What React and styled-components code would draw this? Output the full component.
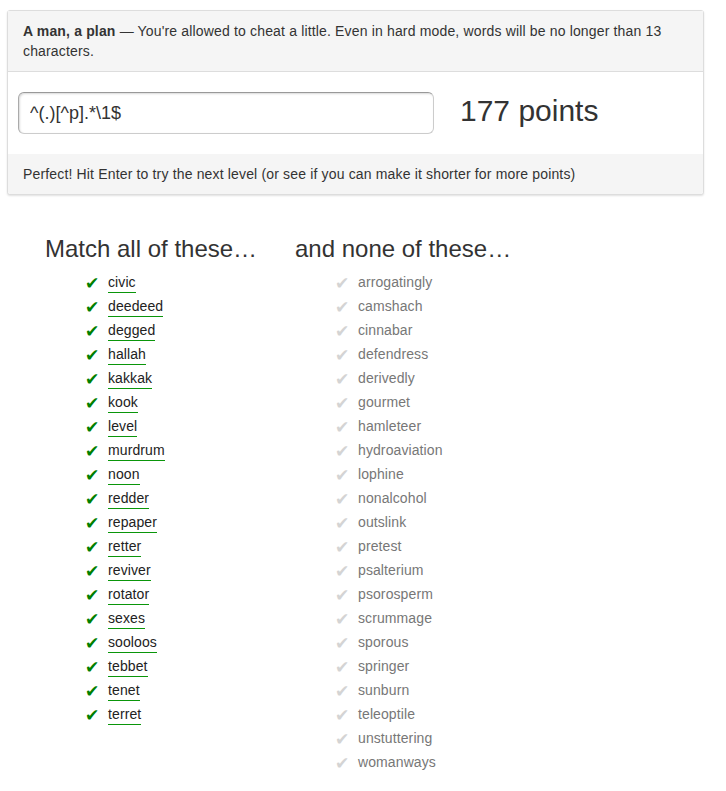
import React from 'react';
import styled, { createGlobalStyle } from 'styled-components';

const matchWords = [
	'civic', 'deedeed', 'degged', 'hallah', 'kakkak', 'kook', 'level', 'murdrum',
	'noon', 'redder', 'repaper', 'retter', 'reviver', 'rotator', 'sexes', 'sooloos',
	'tebbet', 'tenet', 'terret'
];
const noneWords = [
	'arrogatingly', 'camshach', 'cinnabar', 'defendress', 'derivedly', 'gourmet',
	'hamleteer', 'hydroaviation', 'lophine', 'nonalcohol', 'outslink', 'pretest',
	'psalterium', 'psorosperm', 'scrummage', 'sporous', 'springer', 'sunburn',
	'teleoptile', 'unstuttering', 'womanways'
];

const GlobalStyle = createGlobalStyle`
	body {
		margin: 0;
		background: #fff;
		font-family: "Liberation Sans", Arial, sans-serif;
		font-size: 14px;
		line-height: 20px;
		color: #333;
	}
`;

const Page = styled.div`
	padding: 10px 22px 20px 7px;
`;
const Panel = styled.div`
	border: 1px solid #ddd;
	border-radius: 3px;
	background: #fff;
	box-shadow: 0 1px 2px rgba(0, 0, 0, 0.12);
	letter-spacing: 0.16px;
`;
const Heading = styled.div`
	background: #f5f5f5;
	border-bottom: 1px solid #ddd;
	padding: 10px 15px;
	strong {
		font-weight: bold;
	}
`;
const Body = styled.div`
	display: flex;
	align-items: center;
	padding: 20px 10px;
`;
const RegexInput = styled.input`
	box-sizing: border-box;
	width: 416px;
	height: 42px;
	padding: 0 11px;
	font-family: "Liberation Sans", Arial, sans-serif;
	font-size: 18px;
	color: #333;
	border: 1px solid #ccc;
	border-top-color: #999;
	border-left-color: #aaa;
	border-radius: 6px;
	box-shadow: inset 1px 1px 2px rgba(0, 0, 0, 0.15);
	outline: none;
`;
const Points = styled.div`
	margin: 0 0 4px 26px;
	font-size: 30px;
	line-height: 36px;
	letter-spacing: 0;
	color: #333;
`;
const Footer = styled.div`
	background: #f5f5f5;
	padding: 10px 15px;
	border-radius: 0 0 3px 3px;
`;
const Columns = styled.div`
	display: flex;
	padding: 39px 0 0 38px;
`;
const Column = styled.div`
	width: 250px;
`;
const ColumnTitle = styled.h3`
	margin: 0 0 7px;
	font-size: 24px;
	font-weight: normal;
	line-height: 30px;
	color: #333;
`;
const WordList = styled.ul`
	list-style: none;
	margin: 0;
	padding: 0 0 0 40px;
`;
const Word = styled.li`
	display: flex;
	align-items: center;
	height: 24px;
`;
const Check = styled.span`
	width: 23px;
	font-size: 17px;
	font-style: italic;
	color: ${p => (p.$ok ? '#008000' : '#d4d4d4')};
	font-family: "DejaVu Sans", sans-serif;
`;
const Label = styled.span`
	color: ${p => (p.$ok ? '#222' : '#777')};
	line-height: 17px;
	padding-bottom: 1px;
	letter-spacing: 0.1px;
	border-bottom: ${p => (p.$ok ? '1px solid #0a960a' : '1px solid transparent')};
`;

export default function App() {
	return (
		<Page>
			<GlobalStyle />
			<Panel>
				<Heading>
					<strong>A man, a plan</strong> — You're allowed to cheat a little. Even in hard
					mode, words will be no longer than 13 characters.
				</Heading>
				<Body>
					<RegexInput defaultValue={'^(.)[^p].*\\1$'} />
					<Points>177 points</Points>
				</Body>
				<Footer>Perfect! Hit Enter to try the next level (or see if you can make it shorter for more points)</Footer>
			</Panel>
			<Columns>
				<Column>
					<ColumnTitle>Match all of these…</ColumnTitle>
					<WordList>
						{matchWords.map(w => (
							<Word key={w}>
								<Check $ok>✔</Check>
								<Label $ok>{w}</Label>
							</Word>
						))}
					</WordList>
				</Column>
				<Column>
					<ColumnTitle>and none of these…</ColumnTitle>
					<WordList>
						{noneWords.map(w => (
							<Word key={w}>
								<Check>✔</Check>
								<Label>{w}</Label>
							</Word>
						))}
					</WordList>
				</Column>
			</Columns>
		</Page>
	);
}
